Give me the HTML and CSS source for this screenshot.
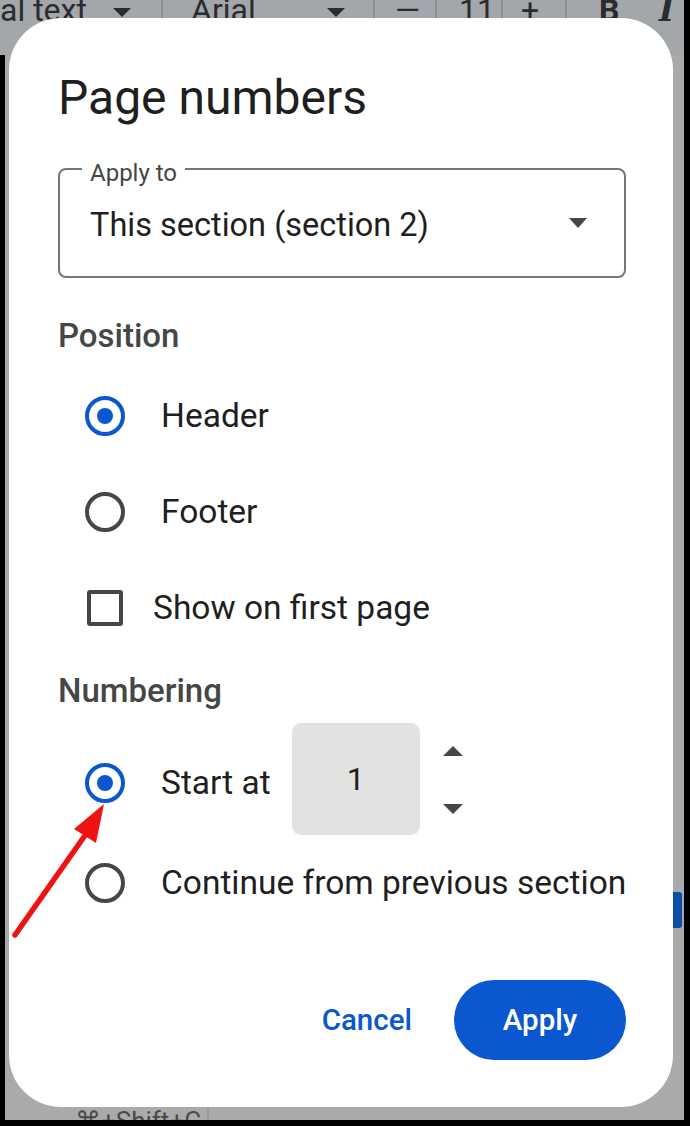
FILE: index.html
```html
<!DOCTYPE html>
<html lang="en">
<head>
<meta charset="utf-8">
<title>Page numbers</title>
<link rel="stylesheet" href="styles.css">
</head>
<body>
<div class="screen">
  <div class="backdrop">
    <div class="toolbar">
      <div class="tb-cell tb-style"><span class="tb-text">al text</span><span class="tb-caret"></span></div>
      <div class="tb-cell tb-font"><span class="tb-text">Arial</span><span class="tb-caret"></span></div>
      <div class="tb-cell tb-minus"><span class="tb-text">—</span></div>
      <div class="tb-cell tb-size"><span class="tb-text">11</span></div>
      <div class="tb-cell tb-plus"><span class="tb-text">+</span></div>
      <div class="tb-cell tb-bold"><span class="tb-text tb-b">B</span></div>
      <div class="tb-cell tb-italic"><span class="tb-text tb-i">I</span></div>
    </div>
    <div class="doc">
      <div class="side-chip"></div>
    </div>
    <div class="menu-foot">
      <span class="shortcut">⌘+Shift+C</span>
      <span class="foot-divider"></span>
    </div>
  </div>

  <div class="dialog" role="dialog" aria-label="Page numbers">
    <h1 class="title">Page numbers</h1>

    <div class="select">
      <span class="select-label">Apply to</span>
      <span class="select-value">This section (section 2)</span>
      <span class="select-caret"></span>
    </div>

    <h2 class="section-heading heading-position">Position</h2>
    <div class="option-row">
      <span class="radio checked"></span>
      <span class="option-label">Header</span>
    </div>
    <div class="option-row">
      <span class="radio"></span>
      <span class="option-label">Footer</span>
    </div>
    <div class="option-row">
      <span class="checkbox"></span>
      <span class="option-label check-label">Show on first page</span>
    </div>

    <h2 class="section-heading heading-numbering">Numbering</h2>
    <div class="option-row start-row">
      <span class="radio checked"></span>
      <span class="option-label">Start at</span>
      <span class="number-box">1</span>
      <span class="spinner">
        <span class="spin-up"></span>
        <span class="spin-down"></span>
      </span>
    </div>
    <div class="option-row">
      <span class="radio"></span>
      <span class="option-label">Continue from previous section</span>
    </div>

    <div class="actions">
      <button class="btn-text">Cancel</button>
      <button class="btn-filled">Apply</button>
    </div>
  </div>

  <svg class="annotation" width="690" height="1126" viewBox="0 0 690 1126" aria-hidden="true">
    <line x1="15" y1="935" x2="86" y2="834" stroke="#ef1212" stroke-width="5.5" stroke-linecap="round"/>
    <polygon points="104,804 74,829 96,843" fill="#ef1212"/>
  </svg>
</div>
</body>
</html>
```

FILE: styles.css
```css
* { box-sizing: border-box; }

html, body {
  margin: 0;
  padding: 0;
  background: #000;
}

body {
  font-family: Roboto, "Noto Sans", "Liberation Sans", sans-serif;
}

.screen {
  position: relative;
  width: 690px;
  height: 1126px;
  padding: 0 6px 6px 5px;
  background: #000;
  overflow: hidden;
}

/* ---------- dimmed background document ---------- */
.backdrop {
  height: 100%;
  display: flex;
  flex-direction: column;
  background: #aaaaaa;
}

.toolbar {
  height: 55px;
  display: flex;
  margin-left: -5px;
  padding-left: 5px;
  background: #a3a6ab;
  color: #2a2b2d;
  overflow: hidden;
}

.tb-cell {
  display: flex;
  align-items: flex-start;
  height: 26px;
  border-right: 2px solid #8b8e93;
  overflow: hidden;
}

.tb-text {
  font-size: 32px;
  line-height: 26px;
  margin-top: -3px;
  white-space: nowrap;
}

.tb-caret {
  width: 0;
  height: 0;
  border-left: 9px solid transparent;
  border-right: 9px solid transparent;
  border-top: 9px solid #2a2b2d;
  margin-top: 8px;
}

.tb-style { width: 163px; margin-left: -5px; }
.tb-style .tb-caret { margin-left: 26px; }
.tb-font { width: 212px; padding-left: 28px; }
.tb-font .tb-caret { margin-left: 71px; }
.tb-minus { width: 62px; padding-left: 20px; }
.tb-size { width: 66px; padding-left: 22px; }
.tb-plus { width: 64px; padding-left: 18px; }
.tb-bold { width: 72px; padding-left: 32px; border-right: none; }
.tb-italic { flex: 1; padding-left: 20px; border-right: none; }
.tb-b { font-weight: 700; }
.tb-i { font-style: italic; font-weight: 700; font-family: "DejaVu Serif", serif; }

.doc {
  flex: 1;
  display: flex;
  flex-direction: column;
  align-items: flex-end;
}

.side-chip {
  margin-top: 837px;
  margin-right: 2px;
  width: 14px;
  height: 36px;
  border-radius: 3px;
  background: #0d4fa8;
}

.menu-foot {
  height: 13px;
  display: flex;
  align-items: flex-start;
  overflow: hidden;
}

.shortcut {
  margin-left: 70px;
  width: 132px;
  font-size: 26px;
  line-height: 26px;
  margin-top: 1px;
  color: #4a4a4a;
  white-space: nowrap;
}

.foot-divider {
  width: 2px;
  height: 13px;
  background: #9a9a9a;
}

/* ---------- dialog ---------- */
.dialog {
  position: absolute;
  left: 9px;
  top: 18px;
  width: 664px;
  height: 1089px;
  border-radius: 52px;
  background: #ffffff;
  padding: 52px 47px 0 49px;
  color: #1f1f1f;
}

.title {
  margin: 0;
  font-size: 48px;
  line-height: 56px;
  font-weight: 400;
  color: #1f1f1f;
}

.select {
  position: relative;
  margin-top: 42px;
  height: 110px;
  border: 2px solid #747775;
  border-radius: 8px;
  display: flex;
  align-items: center;
  padding: 0 37px 0 30px;
}

.select-label {
  position: absolute;
  left: 22px;
  top: -9px;
  padding: 0 8px;
  background: #fff;
  font-size: 24px;
  line-height: 24px;
  color: #444746;
}

.select-value {
  flex: 1;
  font-size: 32.5px;
  line-height: 40px;
  margin-top: 3px;
  color: #1f1f1f;
}

.select-caret {
  width: 0;
  height: 0;
  border-left: 9px solid transparent;
  border-right: 9px solid transparent;
  border-top: 10px solid #444746;
}

.section-heading {
  margin: 0;
  font-size: 33px;
  line-height: 36px;
  font-weight: 500;
  color: #444746;
}

.heading-position { margin-top: 40px; }
.heading-numbering { margin-top: 17px; }

.option-row {
  height: 96px;
  display: flex;
  align-items: center;
  padding-left: 27px;
}

.heading-position + .option-row { margin-top: 14px; }

.radio {
  flex: none;
  width: 40px;
  height: 40px;
  border-radius: 50%;
  border: 4.5px solid #444746;
  display: flex;
  align-items: center;
  justify-content: center;
}

.radio.checked {
  border-color: #0b57d0;
}

.radio.checked::after {
  content: "";
  width: 16px;
  height: 16px;
  border-radius: 50%;
  background: #0b57d0;
}

.option-label {
  margin-left: 36px;
  font-size: 33.5px;
  line-height: 40px;
  color: #1f1f1f;
  white-space: nowrap;
}

.checkbox {
  flex: none;
  width: 36px;
  height: 36px;
  margin-left: 2px;
  border: 4.5px solid #444746;
  border-radius: 3px;
}

.check-label { margin-left: 30px; }

.start-row {
  height: 112px;
  margin-top: 14px;
}

.start-row .radio,
.start-row .option-label {
  margin-top: 8px;
}

.number-box {
  flex: none;
  width: 128px;
  height: 112px;
  margin-left: 21px;
  border-radius: 9px;
  background: #e1e3e1;
  display: flex;
  align-items: center;
  justify-content: center;
  font-size: 32px;
  color: #1f1f1f;
}

.spinner {
  display: flex;
  flex-direction: column;
  justify-content: space-between;
  height: 68px;
  margin-left: 23px;
  margin-top: 2px;
}

.spin-up {
  width: 0;
  height: 0;
  border-left: 10px solid transparent;
  border-right: 10px solid transparent;
  border-bottom: 10px solid #444746;
}

.spin-down {
  width: 0;
  height: 0;
  border-left: 10px solid transparent;
  border-right: 10px solid transparent;
  border-top: 10px solid #444746;
}

.actions {
  margin-top: 49px;
  display: flex;
  justify-content: flex-end;
  align-items: center;
}

.btn-text,
.btn-filled {
  font-family: Roboto, "Noto Sans", "Liberation Sans", sans-serif;
  font-size: 29.5px;
  font-weight: 500;
  border: none;
  cursor: pointer;
}

.btn-text {
  background: transparent;
  color: #0b57d0;
  padding: 0;
  margin-right: 42px;
}

.btn-filled {
  width: 172px;
  height: 80px;
  border-radius: 40px;
  background: #0b57d0;
  color: #ffffff;
}

/* ---------- annotation ---------- */
.annotation {
  position: absolute;
  left: 0;
  top: 0;
  pointer-events: none;
}
```
